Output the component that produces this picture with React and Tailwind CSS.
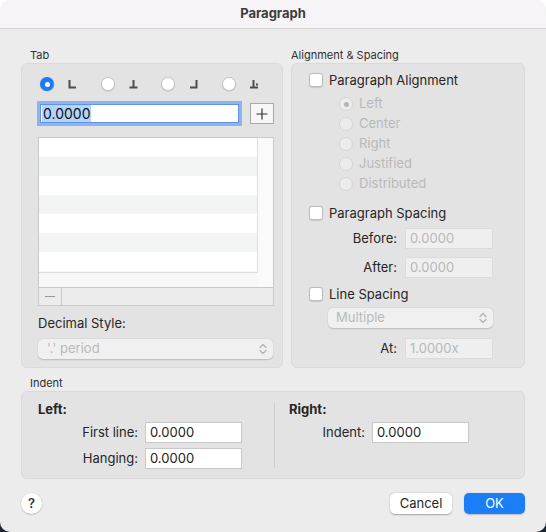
import React from 'react'

const font = { fontFamily: 'Inter, "Noto Sans", "Liberation Sans", sans-serif' }

function TabIcon({ kind }) {
  return (
    <svg width="9" height="9" viewBox="0 0 9 9" className="text-[#4d4d4d]">
      {kind === 'left' && <path d="M1.5 0 V7.5 H8" stroke="currentColor" strokeWidth="2" fill="none" />}
      {kind === 'center' && <path d="M4.5 0 V7.5 M0.5 7.5 H8.5" stroke="currentColor" strokeWidth="2" fill="none" />}
      {kind === 'right' && <path d="M7.5 0 V7.5 H1" stroke="currentColor" strokeWidth="2" fill="none" />}
      {kind === 'decimal' && (
        <>
          <path d="M3.5 0 V7.5 M0 7.5 H8" stroke="currentColor" strokeWidth="2" fill="none" />
          <rect x="6" y="3.5" width="2" height="2" fill="currentColor" />
        </>
      )}
    </svg>
  )
}

function Radio({ checked, disabled }) {
  if (checked && !disabled) {
    return (
      <span className="w-[14px] h-[14px] rounded-full bg-[#1b7cf5] flex items-center justify-center shadow-[0_0.5px_1px_rgba(0,0,0,0.2)]">
        <span className="w-[5px] h-[5px] rounded-full bg-white" />
      </span>
    )
  }
  if (disabled) {
    return (
      <span className="w-[14px] h-[14px] rounded-full bg-[#ececec] border border-[#d6d6d6] flex items-center justify-center">
        {checked && <span className="w-[5px] h-[5px] rounded-full bg-[#b5b5b5]" />}
      </span>
    )
  }
  return <span className="w-[14px] h-[14px] rounded-full bg-white border border-[#c4c4c4] shadow-[0_0.5px_1px_rgba(0,0,0,0.15)]" />
}

function Checkbox() {
  return <span className="w-[14px] h-[14px] rounded-[3px] bg-white border border-[#bdbdbd] shadow-[0_0.5px_1px_rgba(0,0,0,0.12)] shrink-0" />
}

function Chevrons({ color = '#b3b3b3' }) {
  return (
    <svg width="8" height="12" viewBox="0 0 8 12">
      <path d="M1 4.5 L4 1.5 L7 4.5 M1 7.5 L4 10.5 L7 7.5" stroke={color} strokeWidth="1.3" fill="none" strokeLinecap="round" strokeLinejoin="round" />
    </svg>
  )
}

function Field({ value, disabled, w = 'w-[88px]' }) {
  return (
    <div className={`${w} h-[21px] border flex items-center pl-[4px] text-[13px] ${disabled ? 'bg-[#efefef] border-[#dcdcdc] text-[#b8b8b8]' : 'bg-white border-[#c9c9c9] text-[#222]'}`}>
      {value}
    </div>
  )
}

export default function App() {
  const tabKinds = ['left', 'center', 'right', 'decimal']
  return (
    <div style={font} className="w-[546px] h-[532px] bg-[linear-gradient(to_bottom,#ffffff_50%,#1b2630_50%)]">
      <div className="w-full h-full rounded-[10px] overflow-hidden bg-[#ececec] flex flex-col text-[#262626]">
        <div className="h-[29px] shrink-0 bg-[#f6f4f6] border-b border-[#d3d3d3] flex items-center justify-center text-[13px] font-bold text-[#3c3c3c]">
          Paragraph
        </div>

        <div className="px-[21px] flex-1 flex flex-col">
          <div className="flex gap-[8px] mt-[18px]">
            {/* Tab */}
            <div className="w-[262px] flex flex-col">
              <div className="h-[16px] pl-[9px] text-[11px] leading-[16px] text-[#303030]">Tab</div>
              <div className="h-[305px] rounded-[6px] bg-[#e3e3e3] border border-[#dadada] pl-[16px] pt-[13px] flex flex-col">
                <div className="flex ml-[2px]">
                  {tabKinds.map((k, i) => (
                    <div key={k} className="w-[62px] flex items-center gap-[14px]">
                      <Radio checked={i === 0} />
                      <TabIcon kind={k} />
                    </div>
                  ))}
                </div>
                <div className="flex items-center mt-[12px] ml-[2px]">
                  <div className="w-[199px] h-[19px] bg-white border border-[#5f93e6] shadow-[0_0_0_3px_#8fb3ee] flex items-center pl-[1px]">
                    <span className="bg-[#b3d4fc] text-[14px] leading-[17px] px-[1px] text-[#111]">0.0000</span>
                  </div>
                  <div className="ml-[11px] w-[24px] h-[21px] bg-[#f7f7f7] border border-[#a9a9a9] flex items-center justify-center">
                    <svg width="12" height="12" viewBox="0 0 12 12">
                      <path d="M6 0.5 V11.5 M0.5 6 H11.5" stroke="#333" strokeWidth="1.2" />
                    </svg>
                  </div>
                </div>
                <div className="mt-[13px] w-[236px] h-[169px] border border-[#c9c9c9] flex flex-col">
                  <div className="flex h-[149px] bg-[#f8f8f8]">
                    <div className="w-[219px] flex flex-col border-r border-b border-[#dedede] h-[135px]">
                      {[0, 1, 2, 3, 4, 5, 6].map(i => (
                        <div key={i} className={`h-[19px] ${i % 2 ? 'bg-[#f3f4f4]' : 'bg-white'}`} />
                      ))}
                    </div>
                    <div className="flex-1 bg-[#fafafa]" />
                  </div>
                  <div className="flex-1 border-t border-[#c9c9c9] bg-[#ececec] flex">
                    <div className="w-[23px] border-r border-[#c9c9c9] flex items-center justify-center">
                      <span className="w-[10px] h-[1px] bg-[#9a9a9a]" />
                    </div>
                  </div>
                </div>
                <div className="mt-[9px] h-[16px] text-[13px] leading-[16px] text-[#262626]">Decimal Style:</div>
                <div className="mt-[8px] w-[235px] h-[20px] rounded-[5px] bg-[#f0f0f0] shadow-[0_0.5px_1.5px_rgba(0,0,0,0.18)] flex items-center justify-between pl-[9px] pr-[6px] text-[13px] text-[#b9b9b9]">
                  <span>'.' period</span>
                  <Chevrons />
                </div>
              </div>
            </div>

            {/* Alignment & Spacing */}
            <div className="w-[234px] flex flex-col">
              <div className="h-[16px] pl-[-1px] text-[11px] leading-[16px] text-[#303030]">Alignment &amp; Spacing</div>
              <div className="h-[305px] rounded-[6px] bg-[#e3e3e3] border border-[#dadada] pl-[17px] pr-[31px] pt-[9px] flex flex-col text-[13px]">
                <div className="flex items-center gap-[6px] h-[14px]">
                  <Checkbox />
                  <span className="leading-[16px]">Paragraph Alignment</span>
                </div>
                <div className="mt-[7px] ml-[30px] flex flex-col">
                  {['Left', 'Center', 'Right', 'Justified', 'Distributed'].map((t, i) => (
                    <div key={t} className="h-[20px] flex items-center gap-[6px] text-[#b9b9b9]">
                      <Radio disabled checked={i === 0} />
                      <span>{t}</span>
                    </div>
                  ))}
                </div>
                <div className="mt-[12px] flex items-center gap-[6px] h-[14px]">
                  <Checkbox />
                  <span className="leading-[16px]">Paragraph Spacing</span>
                </div>
                <div className="mt-[8px] flex items-center justify-end gap-[8px]">
                  <span>Before:</span>
                  <Field value="0.0000" disabled />
                </div>
                <div className="mt-[8px] flex items-center justify-end gap-[8px]">
                  <span>After:</span>
                  <Field value="0.0000" disabled />
                </div>
                <div className="mt-[9px] flex items-center gap-[6px] h-[14px]">
                  <Checkbox />
                  <span className="leading-[16px]">Line Spacing</span>
                </div>
                <div className="mt-[7px] ml-[19px] h-[20px] rounded-[5px] bg-[#f0f0f0] shadow-[0_0.5px_1.5px_rgba(0,0,0,0.18)] flex items-center justify-between pl-[8px] pr-[6px] text-[#b9b9b9]">
                  <span>Multiple</span>
                  <Chevrons />
                </div>
                <div className="mt-[10px] flex items-center justify-end gap-[8px]">
                  <span>At:</span>
                  <Field value="1.0000x" disabled />
                </div>
              </div>
            </div>
          </div>

          {/* Indent */}
          <div className="mt-[7px] h-[16px] pl-[9px] text-[11px] leading-[16px] text-[#303030]">Indent</div>
          <div className="h-[88px] rounded-[6px] bg-[#e3e3e3] border border-[#dadada] pl-[16px] pt-[9px] flex text-[13px]">
            <div className="w-[204px] flex flex-col">
              <div className="h-[16px] leading-[16px] font-bold">Left:</div>
              <div className="mt-[5px] flex items-center justify-end gap-[7px]">
                <span>First line:</span>
                <Field value="0.0000" w="w-[97px]" />
              </div>
              <div className="mt-[5px] flex items-center justify-end gap-[7px]">
                <span>Hanging:</span>
                <Field value="0.0000" w="w-[97px]" />
              </div>
            </div>
            <div className="ml-[32px] mt-[2px] w-px h-[65px] bg-[#cdcdcd]" />
            <div className="ml-[14px] w-[180px] flex flex-col">
              <div className="h-[16px] leading-[16px] font-bold">Right:</div>
              <div className="mt-[5px] flex items-center justify-end gap-[7px]">
                <span>Indent:</span>
                <Field value="0.0000" w="w-[97px]" />
              </div>
            </div>
          </div>

          <div className="mt-[14px] flex items-center justify-between pl-[0px]">
            <div className="w-[21px] h-[21px] rounded-full bg-white shadow-[0_0.5px_1.5px_rgba(0,0,0,0.3)] flex items-center justify-center text-[13px] font-semibold text-[#333]">
              ?
            </div>
            <div className="flex gap-[12px] text-[13px]">
              <button className="w-[62px] h-[21px] rounded-[5px] bg-white shadow-[0_0.5px_1.5px_rgba(0,0,0,0.3)] text-[#262626]">Cancel</button>
              <button className="w-[61px] h-[21px] rounded-[5px] bg-[#1a7ef7] text-white shadow-[0_0.5px_1.5px_rgba(0,0,0,0.2)]">OK</button>
            </div>
          </div>
        </div>
      </div>
    </div>
  )
}
